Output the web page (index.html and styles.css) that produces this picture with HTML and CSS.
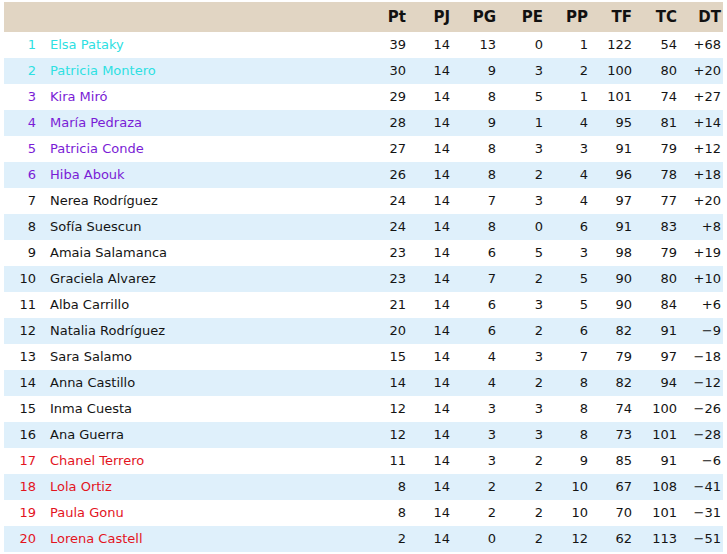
FILE: index.html
```html
<!DOCTYPE html>
<html lang="es">
<head>
<meta charset="utf-8">
<title>Clasificación</title>
<link rel="stylesheet" href="styles.css">
</head>
<body>
<table class="standings">
  <colgroup>
    <col class="c-pos"><col class="c-name">
    <col class="c44"><col class="c44"><col class="c46"><col class="c47"><col class="c45"><col class="c44"><col class="c45"><col class="c-dt">
  </colgroup>
  <thead>
    <tr>
      <th class="pos"></th><th class="name"></th>
      <th>Pt</th><th>PJ</th><th>PG</th><th>PE</th><th>PP</th><th>TF</th><th>TC</th><th>DT</th>
    </tr>
  </thead>
  <tbody>
    <tr class="top"><td class="pos">1</td><td class="name">Elsa Pataky</td><td>39</td><td>14</td><td>13</td><td>0</td><td>1</td><td>122</td><td>54</td><td>+68</td></tr>
    <tr class="top"><td class="pos">2</td><td class="name">Patricia Montero</td><td>30</td><td>14</td><td>9</td><td>3</td><td>2</td><td>100</td><td>80</td><td>+20</td></tr>
    <tr class="mid"><td class="pos">3</td><td class="name">Kira Miró</td><td>29</td><td>14</td><td>8</td><td>5</td><td>1</td><td>101</td><td>74</td><td>+27</td></tr>
    <tr class="mid"><td class="pos">4</td><td class="name">María Pedraza</td><td>28</td><td>14</td><td>9</td><td>1</td><td>4</td><td>95</td><td>81</td><td>+14</td></tr>
    <tr class="mid"><td class="pos">5</td><td class="name">Patricia Conde</td><td>27</td><td>14</td><td>8</td><td>3</td><td>3</td><td>91</td><td>79</td><td>+12</td></tr>
    <tr class="mid"><td class="pos">6</td><td class="name">Hiba Abouk</td><td>26</td><td>14</td><td>8</td><td>2</td><td>4</td><td>96</td><td>78</td><td>+18</td></tr>
    <tr><td class="pos">7</td><td class="name">Nerea Rodríguez</td><td>24</td><td>14</td><td>7</td><td>3</td><td>4</td><td>97</td><td>77</td><td>+20</td></tr>
    <tr><td class="pos">8</td><td class="name">Sofía Suescun</td><td>24</td><td>14</td><td>8</td><td>0</td><td>6</td><td>91</td><td>83</td><td>+8</td></tr>
    <tr><td class="pos">9</td><td class="name">Amaia Salamanca</td><td>23</td><td>14</td><td>6</td><td>5</td><td>3</td><td>98</td><td>79</td><td>+19</td></tr>
    <tr><td class="pos">10</td><td class="name">Graciela Alvarez</td><td>23</td><td>14</td><td>7</td><td>2</td><td>5</td><td>90</td><td>80</td><td>+10</td></tr>
    <tr><td class="pos">11</td><td class="name">Alba Carrillo</td><td>21</td><td>14</td><td>6</td><td>3</td><td>5</td><td>90</td><td>84</td><td>+6</td></tr>
    <tr><td class="pos">12</td><td class="name">Natalia Rodríguez</td><td>20</td><td>14</td><td>6</td><td>2</td><td>6</td><td>82</td><td>91</td><td>−9</td></tr>
    <tr><td class="pos">13</td><td class="name">Sara Salamo</td><td>15</td><td>14</td><td>4</td><td>3</td><td>7</td><td>79</td><td>97</td><td>−18</td></tr>
    <tr><td class="pos">14</td><td class="name">Anna Castillo</td><td>14</td><td>14</td><td>4</td><td>2</td><td>8</td><td>82</td><td>94</td><td>−12</td></tr>
    <tr><td class="pos">15</td><td class="name">Inma Cuesta</td><td>12</td><td>14</td><td>3</td><td>3</td><td>8</td><td>74</td><td>100</td><td>−26</td></tr>
    <tr><td class="pos">16</td><td class="name">Ana Guerra</td><td>12</td><td>14</td><td>3</td><td>3</td><td>8</td><td>73</td><td>101</td><td>−28</td></tr>
    <tr class="low"><td class="pos">17</td><td class="name">Chanel Terrero</td><td>11</td><td>14</td><td>3</td><td>2</td><td>9</td><td>85</td><td>91</td><td>−6</td></tr>
    <tr class="low"><td class="pos">18</td><td class="name">Lola Ortiz</td><td>8</td><td>14</td><td>2</td><td>2</td><td>10</td><td>67</td><td>108</td><td>−41</td></tr>
    <tr class="low"><td class="pos">19</td><td class="name">Paula Gonu</td><td>8</td><td>14</td><td>2</td><td>2</td><td>10</td><td>70</td><td>101</td><td>−31</td></tr>
    <tr class="low"><td class="pos">20</td><td class="name">Lorena Castell</td><td>2</td><td>14</td><td>0</td><td>2</td><td>12</td><td>62</td><td>113</td><td>−51</td></tr>
  </tbody>
</table>
</body>
</html>
```

FILE: styles.css
```css
html, body {
  margin: 0;
  padding: 0;
  background: #ffffff;
}
body {
  padding: 2px 4px 0 4px;
  font-family: "DejaVu Sans", Verdana, sans-serif;
  color: #141414;
}
.standings {
  border-collapse: collapse;
  width: 719px;
  table-layout: fixed;
}
.c-pos { width: 32px; }
.c44 { width: 44px; }
.c45 { width: 45px; }
.c46 { width: 46px; }
.c47 { width: 47px; }
.c-dt { width: 46px; }
.standings th {
  background: #e1d5c3;
  height: 30px;
  padding: 0;
  font-size: 15px;
  font-weight: bold;
  text-align: right;
  color: #111;
}
.standings td {
  height: 25px;
  padding: 0 0 1px 0;
  font-size: 13px;
  line-height: 16px;
  text-align: right;
  white-space: nowrap;
}
.standings td.name {
  text-align: left;
  padding-left: 14px;
}
.standings td:last-child, .standings th:last-child {
  padding-right: 2px;
}
.standings tbody tr:nth-child(even) {
  background: #dff0fb;
}
.standings tr.top td.pos, .standings tr.top td.name { color: #2ee0e2; }
.standings tr.mid td.pos, .standings tr.mid td.name { color: #7a1cd6; }
.standings tr.low td.pos, .standings tr.low td.name { color: #e3141e; }
```
